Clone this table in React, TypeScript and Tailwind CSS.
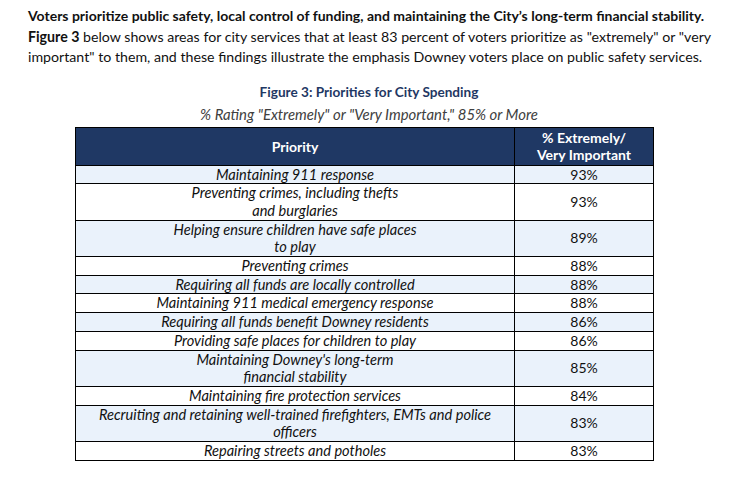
import React from "react";

const rows: { p: React.ReactNode; v: string }[] = [
  { p: "Maintaining 911 response", v: "93%" },
  { p: <>Preventing crimes, including thefts<br />and burglaries</>, v: "93%" },
  { p: <>Helping ensure children have safe places<br />to play</>, v: "89%" },
  { p: "Preventing crimes", v: "88%" },
  { p: "Requiring all funds are locally controlled", v: "88%" },
  { p: "Maintaining 911 medical emergency response", v: "88%" },
  { p: "Requiring all funds benefit Downey residents", v: "86%" },
  { p: "Providing safe places for children to play", v: "86%" },
  { p: <>Maintaining Downey's long-term<br />financial stability</>, v: "85%" },
  { p: "Maintaining fire protection services", v: "84%" },
  { p: <>Recruiting and retaining well-trained firefighters, EMTs and police<br />officers</>, v: "83%" },
  { p: "Repairing streets and potholes", v: "83%" },
];

export default function App() {
  return (
    <div
      className="w-[748px] h-[503px] bg-white text-[#111] overflow-hidden"
      style={{ fontFamily: "Lato, 'Open Sans', sans-serif" }}
    >
      <div className="pl-[28px] pt-[6px] leading-[20.5px]">
        <p className="font-bold text-[14px]">
          Voters prioritize public safety, local control of funding, and maintaining the City’s long-term financial stability.
        </p>
        <p className="text-[14.2px]">
          <span className="font-bold">Figure 3</span> below shows areas for city services that at least 83 percent of voters prioritize as "extremely" or "very
          important" to them, and these findings illustrate the emphasis Downey voters place on public safety services.
        </p>
      </div>
      <div className="w-[578px] ml-[75px] mt-[14px]">
        <div className="text-center font-bold text-[#1f3864] text-[13.6px] leading-[20px] pl-[10px]">
          Figure 3: Priorities for City Spending
        </div>
        <div className="text-center italic text-[#404040] text-[14.9px] leading-[20px] mt-[2px] pl-[10px]">
          % Rating "Extremely" or "Very Important," 85% or More
        </div>
        <table className="mt-[3px] w-[578px] border-collapse table-fixed text-[14.6px]">
          <colgroup>
            <col className="w-[439px]" />
            <col className="w-[139px]" />
          </colgroup>
          <thead>
            <tr className="bg-[#1f3864] text-white font-bold">
              <th className="border border-black h-[38px] leading-[17px] font-bold text-[14px]">Priority</th>
              <th className="border border-black h-[38px] leading-[17px] font-bold text-[14px]">
                % Extremely/
                <br />
                Very Important
              </th>
            </tr>
          </thead>
          <tbody>
            {rows.map((r, i) => (
              <tr key={i} className={i % 2 === 0 ? "bg-[#eaf2fb]" : "bg-white"}>
                <td className="border border-black text-center italic leading-[17.7px] p-0">{r.p}</td>
                <td className="border border-black text-center leading-[17.7px] p-0 text-[14px]">{r.v}</td>
              </tr>
            ))}
          </tbody>
        </table>
      </div>
    </div>
  );
}
